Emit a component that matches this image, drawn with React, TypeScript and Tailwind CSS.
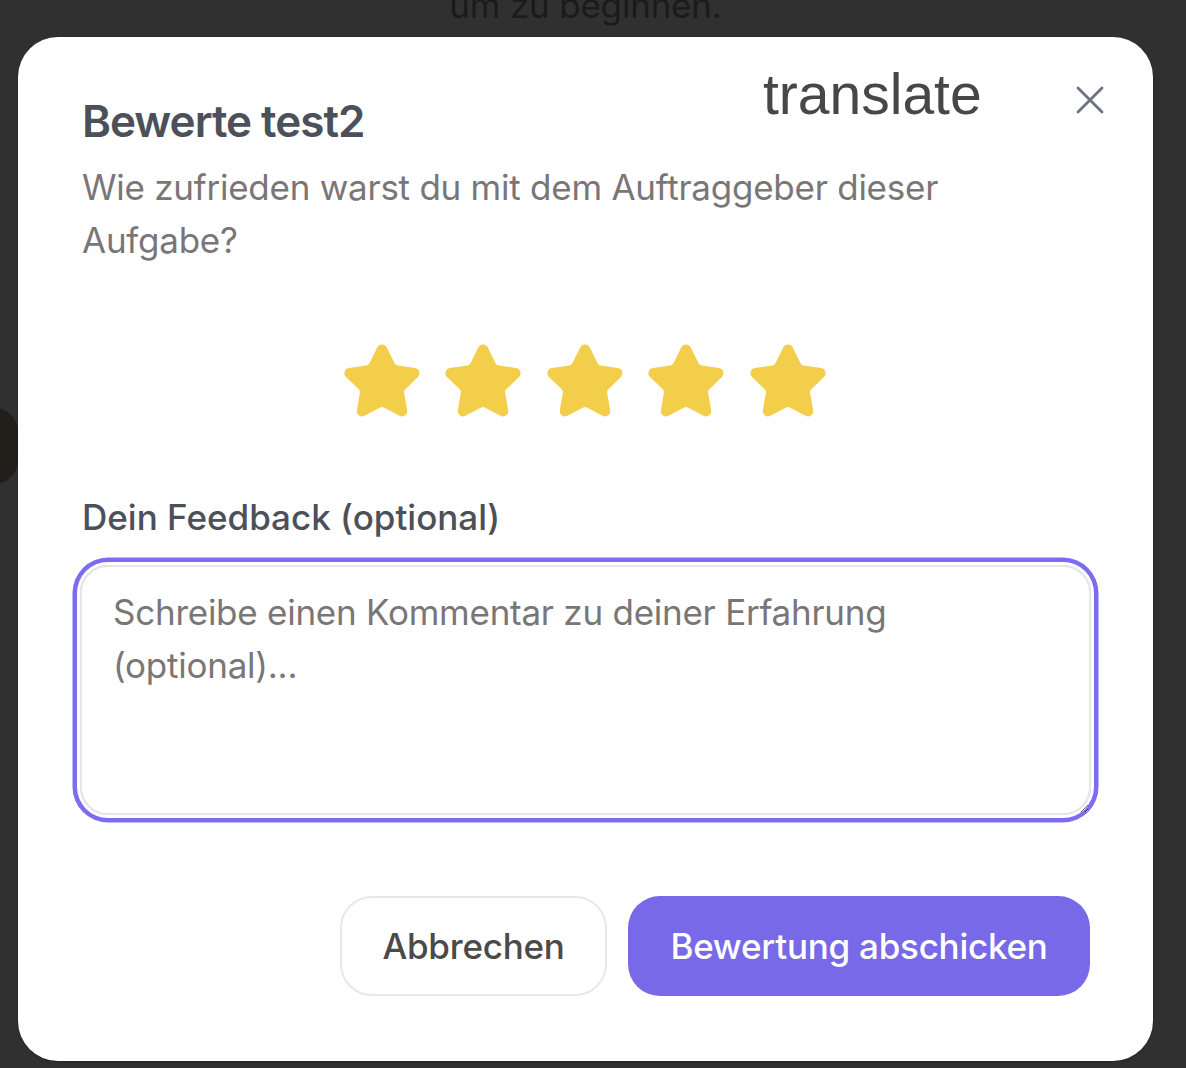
import { Star, X } from 'lucide-react'

export default function App() {
  const stars = [1, 2, 3, 4, 5]

  return (
    <main
      className="relative min-h-[1068px] w-full overflow-hidden bg-[#303030]"
      style={{ fontFamily: 'Inter, "Noto Sans", sans-serif' }}
    >
      {/* background page bits peeking out behind the dialog */}
      <div className="absolute left-[-30px] top-[408px] h-[76px] w-[48px] rounded-full bg-[#221f1b]" />

      <div className="relative pl-[18px] pr-[33px]">
        <div className="flex h-[37px] justify-center overflow-hidden">
          <p className="-mt-[21px] text-[35px] leading-[52.8px] tracking-[-0.2px] text-[#1b1b1b]">um zu beginnen.</p>
        </div>

        {/* Dialog */}
        <div className="relative rounded-[40px] bg-white px-[62px] pb-[65px] pt-[58px] shadow-[0_1px_2px_rgba(0,0,0,0.25)]">
          <span
            className="absolute left-[745px] top-[17px] text-[57px] leading-[80px] text-[#474747]"
            style={{ fontFamily: '"Liberation Sans", Arial, sans-serif' }}
          >
            translate
          </span>
          <button className="absolute right-[39px] top-[39px] flex h-[48px] w-[48px] items-center justify-center text-[#6b7280]">
            <X size={48} strokeWidth={1.4} />
          </button>

          <h2 className="pl-[2px] text-[44px] font-semibold leading-[53px] tracking-[-1px] text-[#4b505a]">
            Bewerte test2
          </h2>
          <p className="mt-[13px] max-w-[900px] pl-[2px] text-[35px] leading-[52.8px] tracking-[-0.25px] text-[#7a7676]">
            Wie zufrieden warst du mit dem Auftraggeber dieser Aufgabe?
          </p>

          <div className="mt-[74px] flex justify-center gap-[19.5px] pr-[2px]">
            {stars.map((s) => (
              <button key={s} className="block">
                <Star size={82} fill="#f3ce4b" color="#f3ce4b" strokeWidth={2} />
              </button>
            ))}
          </div>

          <label className="mt-[68px] block pl-[2px] text-[35px] font-medium leading-[52.8px] text-[#4b505a]">
            Dein Feedback (optional)
          </label>
          <textarea
            className="mt-[22px] block h-[250px] w-full rounded-[28px] border-2 border-[#e6e6e6] px-[31px] py-[19px] text-[35px] leading-[52.8px] tracking-[-0.25px] text-[#333] shadow-[0_0_0_3px_#ffffff,0_0_0_7.5px_#7b6cf0] outline-none placeholder:text-[#7a7676]"
            placeholder="Schreibe einen Kommentar zu deiner Erfahrung (optional)..."
          />

          <div className="mt-[81px] flex justify-end gap-[21px] pr-[1px]">
            <button className="h-[100px] w-[267px] rounded-[32px] border-2 border-[#e8e8e8] bg-white text-[35px] font-medium tracking-[-0.25px] text-[#4a4a4a]">
              Abbrechen
            </button>
            <button className="h-[100px] w-[462px] rounded-[32px] bg-[#7769e8] text-[35px] font-medium tracking-[-0.25px] text-white">
              Bewertung abschicken
            </button>
          </div>
        </div>
      </div>
    </main>
  )
}
